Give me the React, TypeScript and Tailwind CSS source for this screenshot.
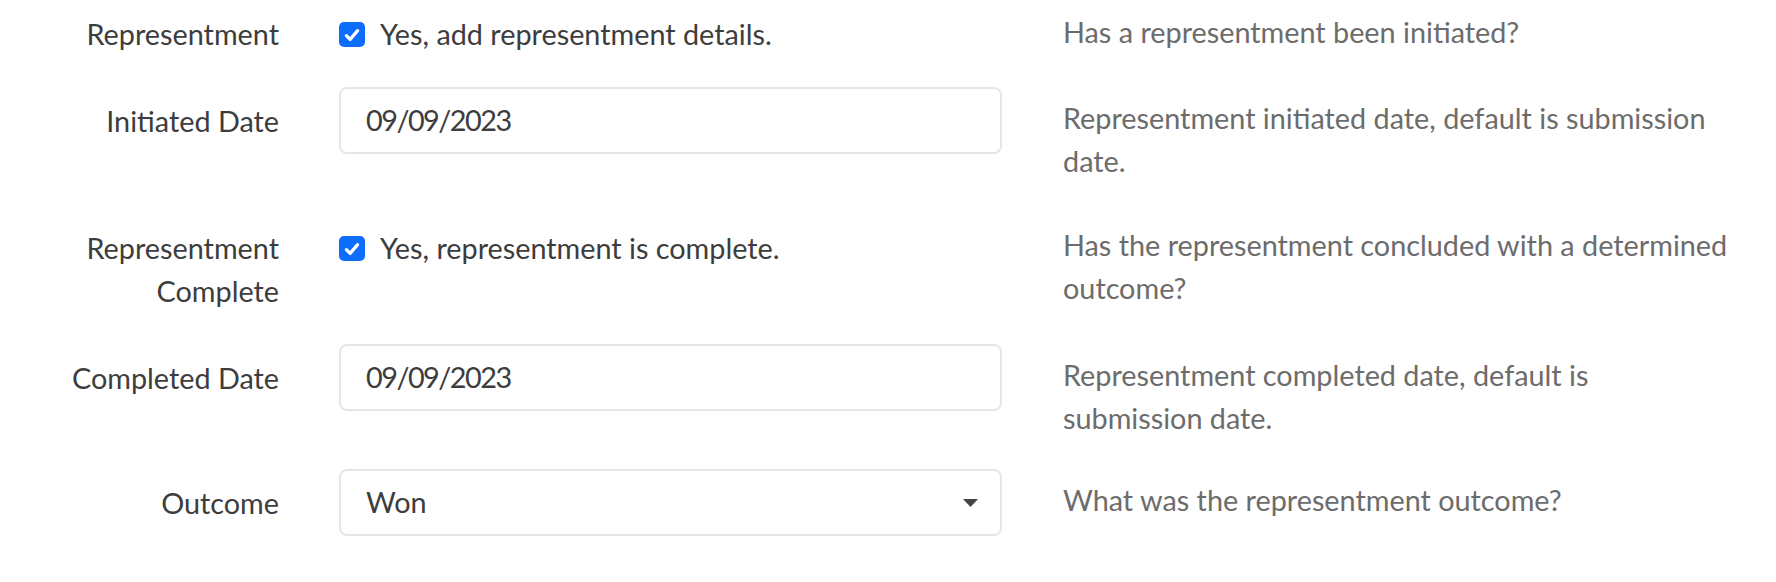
import { ReactNode } from 'react';

const font = { fontFamily: 'Lato, "Noto Sans", sans-serif' };

const Check = ({ label }: { label: string }) => (
    <label className="flex items-center gap-[15px] pt-[13px] text-[28.8px] leading-[43px] text-[#3d3d3d]">
        <span className="flex h-[25px] w-[26px] shrink-0 items-center justify-center rounded-[5px] bg-[#0d6efd]">
            <svg viewBox="0 0 16 16" className="h-[20px] w-[20px]" fill="none">
                <path d="M3.5 8.5l3 3 6-7" stroke="#fff" strokeWidth="2.6" strokeLinecap="round" strokeLinejoin="round" />
            </svg>
        </span>
        {label}
    </label>
);

const TextBox = ({ value }: { value: string }) => (
    <div className="flex h-[67px] w-[663px] items-center rounded-[8px] border-2 border-[#e4e6e8] bg-white px-[25px] text-[28.8px] tracking-[-1.5px] text-[#3d3d3d]">{value}</div>
);

const SelectBox = ({ value }: { value: string }) => (
    <div className="flex h-[67px] w-[663px] items-center justify-between rounded-[8px] border-2 border-[#e4e6e8] bg-white pr-[22px] pl-[25px] text-[28.8px] text-[#3d3d3d]">
        <span>{value}</span>
        <svg viewBox="0 0 15 8" className="h-[8px] w-[15px]">
            <path d="M0 0h15L7.5 8z" fill="#444" />
        </svg>
    </div>
);

const Row = ({ label, field, help, mb, labelPt = 'pt-[13px]', helpPt = 'pt-[10px]' }: { label: ReactNode; field: ReactNode; help: string; mb: string; labelPt?: string; helpPt?: string }) => (
    <div className={`flex items-start ${mb}`}>
        <div className={`w-[279px] shrink-0 text-right text-[28.8px] leading-[43px] text-[#3d3d3d] ${labelPt}`}>{label}</div>
        <div className="ml-[60px] w-[663px] shrink-0">{field}</div>
        <div className={`ml-[61px] w-[668px] text-[28.8px] leading-[43px] text-[#6c6c6c] ${helpPt}`}>{help}</div>
    </div>
);

export default function App() {
    return (
        <div className="h-[582px] w-[1776px] bg-white" style={font}>
            <Row label="Representment" field={<Check label="Yes, add representment details." />} help="Has a representment been initiated?" mb="mb-[31px]" helpPt="pt-[11px]" />
            <Row label="Initiated Date" field={<TextBox value="09/09/2023" />} help="Representment initiated date, default is submission date." mb="mb-[31px]" />
            <Row
                label={
                    <>
                        Representment
                        <br />
                        Complete
                    </>
                }
                field={<Check label="Yes, representment is complete." />}
                help="Has the representment concluded with a determined outcome?"
                mb="mb-[31px]"
            />
            <Row label="Completed Date" field={<TextBox value="09/09/2023" />} help="Representment completed date, default is submission date." mb="mb-[29px]" />
            <Row label="Outcome" field={<SelectBox value="Won" />} help="What was the representment outcome?" mb="mb-0" />
        </div>
    );
}
